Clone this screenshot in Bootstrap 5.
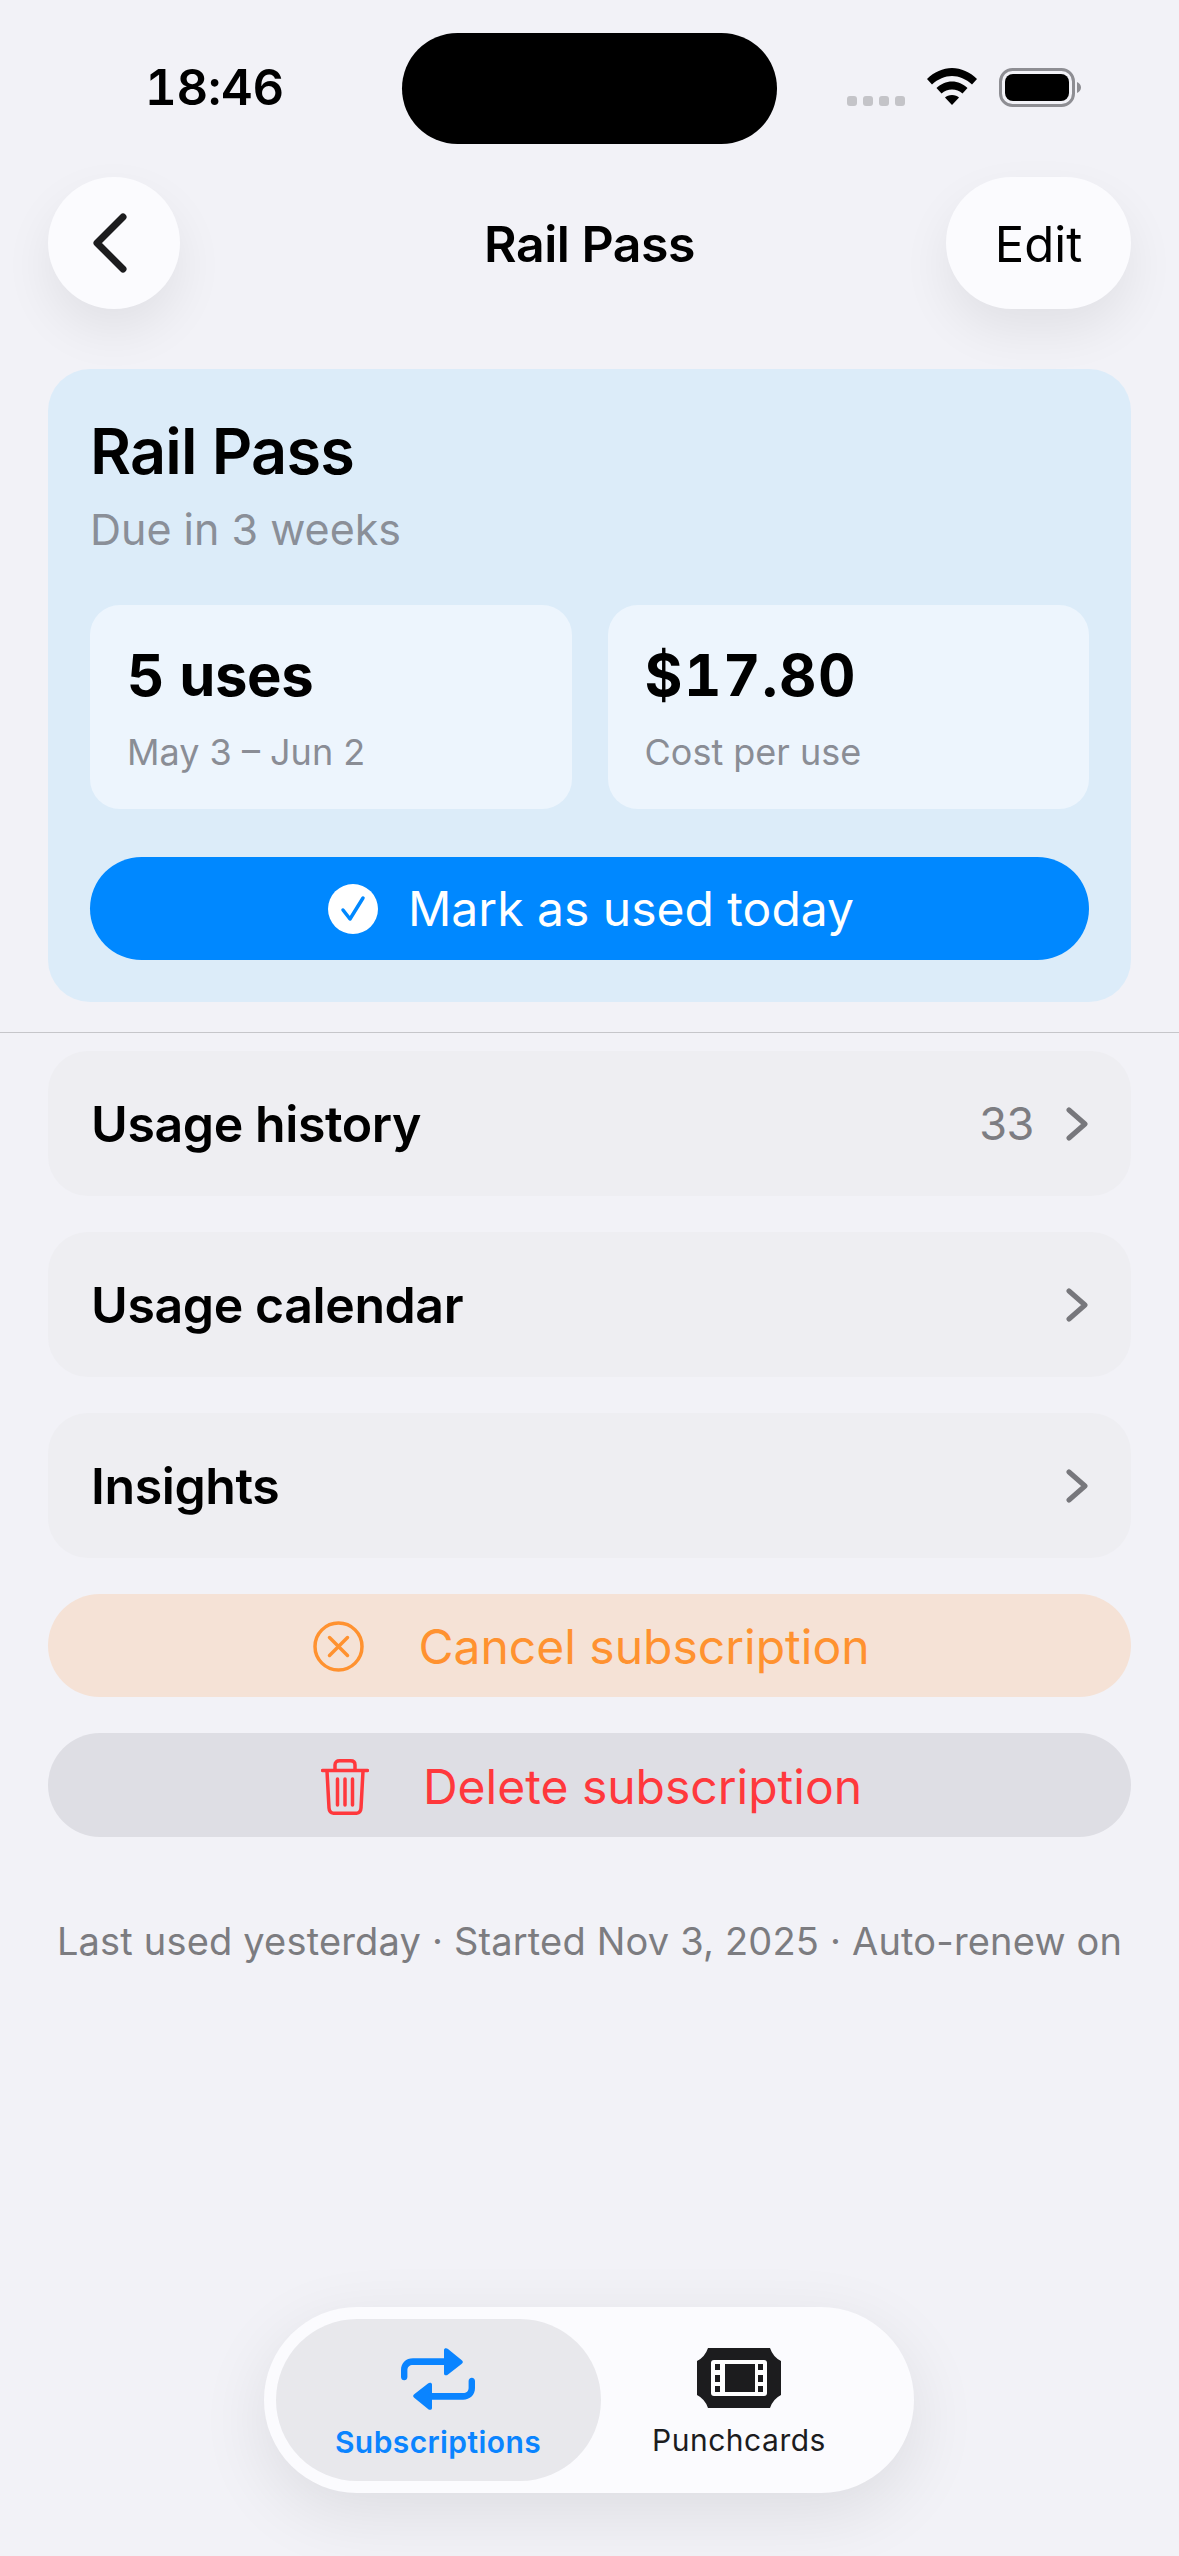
<!DOCTYPE html>
<html lang="en">
<head>
<meta charset="utf-8">
<title>Rail Pass</title>
<link href="https://cdn.jsdelivr.net/npm/bootstrap@5.3.0/dist/css/bootstrap.min.css" rel="stylesheet">
<style>
html,body{height:2556px;overflow:hidden}
body{background:#f2f2f7;font-family:Inter,"Liberation Sans",sans-serif;color:#000}
svg{display:block;flex:none}
.screen{height:2556px;padding:33px 48px 0}
.status{height:111px;margin:0}
.clock{position:absolute;left:145px;top:58px;font-size:49px;line-height:60px;font-weight:600;letter-spacing:-.2px;font-variant-numeric:tabular-nums}
.island{width:375px;height:111px;background:#000;border-radius:56px}
.sysicons{position:absolute;right:98px;top:68px;height:39px}
.dots{gap:6px;margin-top:28px;margin-right:22px}
.dots i{width:10px;height:10px;border-radius:3px;background:#c4c4c8}
.battery{margin-left:22px}
.topbar{height:132px;margin-top:33px;display:grid;grid-template-columns:1fr auto 1fr;align-items:center}
.roundbtn{width:132px;height:132px;border-radius:66px;background:#fbfbfe;box-shadow:0 22px 50px rgba(0,0,0,.07);padding:0 9px 0 0;border:0}
.editbtn{width:185px;height:132px;border-radius:66px;background:#fbfbfe;box-shadow:0 22px 50px rgba(0,0,0,.07);padding:2px 0 0;border:0;font-size:49px;color:#000;line-height:1;justify-self:end}
.navtitle{font-size:50px;font-weight:600;letter-spacing:-.5px;line-height:1;padding-top:2px}
.herocard{margin-top:60px;height:633px;background:#dcecf9;border:0;border-radius:42px;padding:42px}
.herotitle{font-size:63px;font-weight:600;line-height:72px;letter-spacing:-.8px;margin-top:4px}
.herosub{font-size:43px;line-height:52px;color:#8a8f98;margin-top:16px}
.tiles{gap:36px;margin-top:50px}
.tile{flex:1 1 0;height:204px;background:#edf5fd;border-radius:30px;padding:36px 37px}
.tilenum{font-size:58px;font-weight:700;line-height:68px;letter-spacing:-.4px;font-variant-numeric:tabular-nums}
.pricenum{letter-spacing:1.5px}
.tilesub{font-size:36px;line-height:44px;color:#8a8d95;margin-top:21px}
.markbtn{height:103px;margin-top:48px;background:#0088ff;color:#fff;border:0;border-radius:52px;font-size:48px;line-height:1;gap:30px;padding:0 0 0 3px}
.rule{height:1px;margin:30px -48px 18px;background:#c6c6ca;opacity:1;border:0}
.rowstack{gap:36px}
.linkrow{height:145px;background:#eeeef2;border-radius:40px;padding:0 43px;font-size:50px;font-weight:600;letter-spacing:-.4px;line-height:1;color:#000}
.rowcount{font-size:45px;font-weight:400;color:#7d7d82;margin-right:32px}
.actbtn{height:103px;border:0;border-radius:52px;font-size:48px;line-height:1;padding:2px 0 0 4px;gap:54px}
.cancelbtn{background:#f5e2d6;color:#ff9230}
.deletebtn{background:#dedee4;color:#ff383c;height:104px;padding-top:3px}
.footnote{font-size:38px;line-height:46px;letter-spacing:.18px;color:#7c7c80;margin-top:81px;white-space:nowrap}
.tabpill{position:absolute;left:264px;top:2307px;width:650px;height:186px;border-radius:93px;background:#fbfbfe;box-shadow:0 20px 70px rgba(0,0,0,.09);padding:12px}
.tabitem{height:162px;border-radius:81px;padding-top:29px;font-size:30px;line-height:36px;letter-spacing:.5px;color:#1c1c1e}
.tabon{width:325px;background:#e8e8ec;color:#0a84ff;font-weight:600;letter-spacing:.4px;padding-right:1px}
.taboff{width:276px;font-weight:400}
.tabitem span{margin-top:14px}
</style>
</head>
<body>
<div class="screen d-flex flex-column">
  <div class="status d-flex justify-content-center">
    <div class="clock">18:46</div>
    <div class="island"></div>
    <div class="sysicons d-flex">
      <div class="dots d-flex"><i></i><i></i><i></i><i></i></div>
      <svg width="50" height="37" viewBox="0 0 50 37"><path d="M25 0C34 0 43 4 50 11L45 16.500C39 11 32 8 25 8C18 8 11 11 5 16.500L0 11C7 4 16 0 25 0Z"/><path d="M25 13.500C31 13.500 36 16 40.500 20L35.500 25.500C32.500 23 29 21.500 25 21.500C21 21.500 17.500 23 14.500 25.500L9.500 20C14 16 19 13.500 25 13.500Z"/><path d="M25 27C28 27 30.500 28 32 29.500L25 37L18 29.500C19.500 28 22 27 25 27Z"/></svg>
      <svg class="battery" width="82" height="39" viewBox="0 0 82 39"><rect x="1.500" y="1.500" width="73" height="36" rx="12" fill="none" stroke="#8e8e93" stroke-width="3"/><rect x="6" y="6" width="64" height="27" rx="8"/><path d="M78 14C80.500 15 82 17 82 19.500C82 22 80.500 24 78 25Z" fill="#8e8e93"/></svg>
    </div>
  </div>

  <div class="topbar">
    <button class="btn roundbtn d-flex align-items-center justify-content-center" aria-label="Back">
      <svg width="40" height="62" viewBox="0 0 40 62"><path d="M33 5L7 31L33 57" fill="none" stroke="#1c1c1e" stroke-width="7" stroke-linecap="round" stroke-linejoin="round"/></svg>
    </button>
    <div class="navtitle">Rail Pass</div>
    <button class="btn editbtn">Edit</button>
  </div>

  <div class="card herocard">
    <div class="herotitle">Rail Pass</div>
    <div class="herosub">Due in 3 weeks</div>
    <div class="tiles d-flex">
      <div class="tile"><div class="tilenum">5 uses</div><div class="tilesub">May 3 – Jun 2</div></div>
      <div class="tile"><div class="tilenum pricenum">$17.80</div><div class="tilesub">Cost per use</div></div>
    </div>
    <button class="btn markbtn d-flex align-items-center justify-content-center w-100">
      <svg width="50" height="50" viewBox="0 0 50 50"><circle cx="25" cy="25" r="25" fill="#fff"/><path d="M15 26L22 35L35 14" fill="none" stroke="#0088ff" stroke-width="3.500" stroke-linecap="round" stroke-linejoin="round"/></svg>
      <span>Mark as used today</span>
    </button>
  </div>

  <hr class="rule">

  <div class="rowstack d-flex flex-column">
    <div class="linkrow d-flex align-items-center">
      <span class="flex-grow-1">Usage history</span><span class="rowcount">33</span>
      <svg width="22" height="34" viewBox="0 0 22 34"><path d="M3 3L19 17L3 31" fill="none" stroke="#77777c" stroke-width="5" stroke-linecap="round" stroke-linejoin="round"/></svg>
    </div>
    <div class="linkrow d-flex align-items-center">
      <span class="flex-grow-1">Usage calendar</span>
      <svg width="22" height="34" viewBox="0 0 22 34"><path d="M3 3L19 17L3 31" fill="none" stroke="#77777c" stroke-width="5" stroke-linecap="round" stroke-linejoin="round"/></svg>
    </div>
    <div class="linkrow d-flex align-items-center">
      <span class="flex-grow-1">Insights</span>
      <svg width="22" height="34" viewBox="0 0 22 34"><path d="M3 3L19 17L3 31" fill="none" stroke="#77777c" stroke-width="5" stroke-linecap="round" stroke-linejoin="round"/></svg>
    </div>
    <button class="btn actbtn cancelbtn d-flex align-items-center justify-content-center">
      <svg width="51" height="51" viewBox="0 0 51 51"><circle cx="25.500" cy="25.500" r="23.500" fill="none" stroke="#ff9230" stroke-width="3.500"/><path d="M16.500 16.500L34.500 34.500M34.500 16.500L16.500 34.500" fill="none" stroke="#ff9230" stroke-width="3.500" stroke-linecap="round"/></svg>
      <span>Cancel subscription</span>
    </button>
    <button class="btn actbtn deletebtn d-flex align-items-center justify-content-center">
      <svg width="48" height="56" viewBox="0 0 48 56" fill="none" stroke="#ff383c" stroke-width="3.500" stroke-linecap="round" stroke-linejoin="round"><path d="M1.500 11.500H46.500"/><path d="M14 10V6C14 3 16 1.800 18.500 1.800H29.500C32 1.800 34 3 34 6V10"/><path d="M6 12L8 49C8.200 52.500 10 54.300 13.500 54.300H34.500C38 54.300 39.800 52.500 40 49L42 12"/><path d="M16.500 20V46M24 20V46M31.500 20V46"/></svg>
      <span>Delete subscription</span>
    </button>
  </div>

  <div class="footnote text-center">Last used yesterday · Started Nov 3, 2025 · Auto-renew on</div>
</div>

<nav class="tabpill d-flex">
  <div class="tabitem tabon d-flex flex-column align-items-center">
    <svg width="74" height="62" viewBox="0 0 74 62" fill="#0a84ff"><g id="half"><path d="M0 29V22C0 15 5 10.300 12 10.300H44V17H12C8.500 17 6.400 19 6.400 22V29C6.400 31 5 32.300 3.200 32.300C1.400 32.300 0 31 0 29Z"/><path d="M43 2C43 0 45.500 -.5 47 1L60.500 12C62.300 13.300 62.300 14.700 60.500 16L47 26.500C45.500 28 43 27.500 43 25.500Z"/></g><use href="#half" transform="rotate(180 37 31)"/></svg>
    <span>Subscriptions</span>
  </div>
  <div class="tabitem taboff d-flex flex-column align-items-center">
    <svg width="84" height="60" viewBox="0 0 84 60"><path fill="#1c1c1e" d="M11 0H73Q76 9 84 13V47Q76 51 73 60H11Q8 51 0 47V13Q8 9 11 0Z"/><rect x="14" y="12" width="56" height="36" rx="3" fill="#fff"/><rect x="28" y="16" width="30" height="28" fill="#1c1c1e"/><path fill="#1c1c1e" d="M18 16h5v6h-5zM18 27h5v7h-5zM18 38h5v6h-5zM61 16h5v6h-5zM61 27h5v7h-5zM61 38h5v6h-5z"/></svg>
    <span>Punchcards</span>
  </div>
</nav>
<script src="https://cdn.jsdelivr.net/npm/bootstrap@5.3.0/dist/js/bootstrap.bundle.min.js"></script>
</body>
</html>
